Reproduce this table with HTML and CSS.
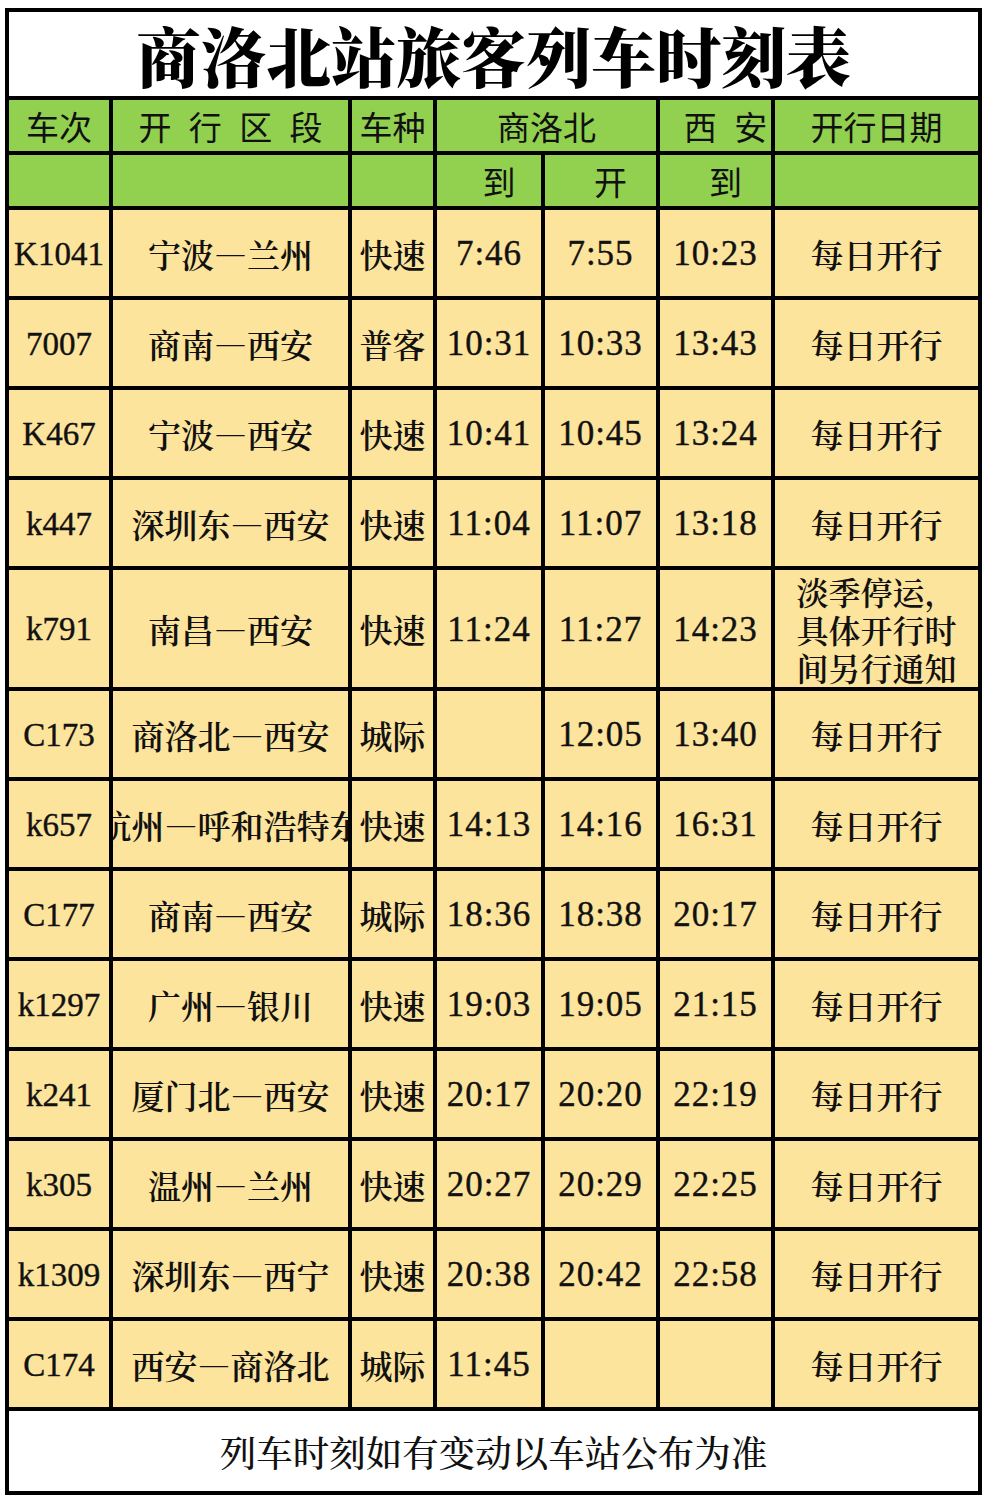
FILE: index.html
```html
<!DOCTYPE html>
<html lang="zh-CN">
<head>
<meta charset="utf-8">
<title>商洛北站旅客列车时刻表</title>
<link rel="stylesheet" href="styles.css">
</head>
<body>
<div class="sheet">
  <div class="cell title">商洛北站旅客列车时刻表</div>

  <div class="cell head">车次</div>
  <div class="cell head">开 行 区 段</div>
  <div class="cell head">车种</div>
  <div class="cell head span2">商洛北</div>
  <div class="cell head shift">西 安</div>
  <div class="cell head">开行日期</div>

  <div class="cell head"></div>
  <div class="cell head"></div>
  <div class="cell head"></div>
  <div class="cell head shift">到</div>
  <div class="cell head shift">开</div>
  <div class="cell head shift">到</div>
  <div class="cell head"></div>

  <div class="cell num train">K1041</div><div class="cell zh route">宁波—兰州</div><div class="cell zh">快速</div><div class="cell num">7:46</div><div class="cell num">7:55</div><div class="cell num">10:23</div><div class="cell zh">每日开行</div>
  <div class="cell num train">7007</div><div class="cell zh route">商南—西安</div><div class="cell zh">普客</div><div class="cell num">10:31</div><div class="cell num">10:33</div><div class="cell num">13:43</div><div class="cell zh">每日开行</div>
  <div class="cell num train">K467</div><div class="cell zh route">宁波—西安</div><div class="cell zh">快速</div><div class="cell num">10:41</div><div class="cell num">10:45</div><div class="cell num">13:24</div><div class="cell zh">每日开行</div>
  <div class="cell num train">k447</div><div class="cell zh route">深圳东—西安</div><div class="cell zh">快速</div><div class="cell num">11:04</div><div class="cell num">11:07</div><div class="cell num">13:18</div><div class="cell zh">每日开行</div>
  <div class="cell num train">k791</div><div class="cell zh route">南昌—西安</div><div class="cell zh">快速</div><div class="cell num">11:24</div><div class="cell num">11:27</div><div class="cell num">14:23</div><div class="cell zh"><span class="note">淡季停运，具体开行时间另行通知</span></div>
  <div class="cell num train">C173</div><div class="cell zh route">商洛北—西安</div><div class="cell zh">城际</div><div class="cell num"></div><div class="cell num">12:05</div><div class="cell num">13:40</div><div class="cell zh">每日开行</div>
  <div class="cell num train">k657</div><div class="cell zh route">杭州—呼和浩特东</div><div class="cell zh">快速</div><div class="cell num">14:13</div><div class="cell num">14:16</div><div class="cell num">16:31</div><div class="cell zh">每日开行</div>
  <div class="cell num train">C177</div><div class="cell zh route">商南—西安</div><div class="cell zh">城际</div><div class="cell num">18:36</div><div class="cell num">18:38</div><div class="cell num">20:17</div><div class="cell zh">每日开行</div>
  <div class="cell num train">k1297</div><div class="cell zh route">广州—银川</div><div class="cell zh">快速</div><div class="cell num">19:03</div><div class="cell num">19:05</div><div class="cell num">21:15</div><div class="cell zh">每日开行</div>
  <div class="cell num train">k241</div><div class="cell zh route">厦门北—西安</div><div class="cell zh">快速</div><div class="cell num">20:17</div><div class="cell num">20:20</div><div class="cell num">22:19</div><div class="cell zh">每日开行</div>
  <div class="cell num train">k305</div><div class="cell zh route">温州—兰州</div><div class="cell zh">快速</div><div class="cell num">20:27</div><div class="cell num">20:29</div><div class="cell num">22:25</div><div class="cell zh">每日开行</div>
  <div class="cell num train">k1309</div><div class="cell zh route">深圳东—西宁</div><div class="cell zh">快速</div><div class="cell num">20:38</div><div class="cell num">20:42</div><div class="cell num">22:58</div><div class="cell zh">每日开行</div>
  <div class="cell num train">C174</div><div class="cell zh route">西安—商洛北</div><div class="cell zh">城际</div><div class="cell num">11:45</div><div class="cell num"></div><div class="cell num"></div><div class="cell zh">每日开行</div>

  <div class="cell foot">列车时刻如有变动以车站公布为准</div>
</div>
</body>
</html>
```

FILE: styles.css
```css
html, body {
  margin: 0;
  padding: 0;
  background: #ffffff;
}

.sheet {
  display: grid;
  grid-template-columns: 100px 235px 81px 104px 111px 111px 203px;
  grid-template-rows: 84px 51px 51px repeat(4, 86px) 117px repeat(8, 86px) 80px;
  gap: 4px;
  padding: 4px;
  background: #000000;
  width: fit-content;
  margin: 8px 0 0 5px;
}

.cell {
  display: flex;
  align-items: center;
  justify-content: center;
  white-space: nowrap;
  color: #111111;
  background: #fde49c;
}

.route {
  overflow: hidden;
}

.title {
  grid-column: 1 / -1;
  background: #ffffff;
  font-family: "Noto Serif CJK SC", "Noto Sans CJK SC", sans-serif;
  font-weight: 900;
  font-size: 65px;
  line-height: 1;
  color: #000000;
}

.head {
  background: #92d050;
  font-family: "Noto Sans CJK SC", sans-serif;
  font-weight: 400;
  font-size: 33px;
  word-spacing: 10px;
}

.span2 {
  grid-column: span 2;
}

.shift {
  padding-left: 20px;
}

.num {
  font-family: "Liberation Serif", "Noto Sans CJK SC", serif;
  font-size: 35px;
  letter-spacing: 1px;
  -webkit-text-stroke: 0.4px #111111;
  padding-top: 2px;
}

.train {
  font-size: 33px;
  letter-spacing: 0;
}

.zh {
  font-family: "Noto Serif CJK SC", "Noto Sans CJK SC", sans-serif;
  font-weight: 600;
  font-size: 33px;
}

.note {
  white-space: normal;
  width: 5em;
  line-height: 38px;
  text-align: left;
  font-size: 32px;
}

.foot {
  grid-column: 1 / -1;
  background: #ffffff;
  font-family: "Noto Serif CJK SC", "Noto Sans CJK SC", sans-serif;
  font-weight: 500;
  font-size: 36.5px;
}
```
